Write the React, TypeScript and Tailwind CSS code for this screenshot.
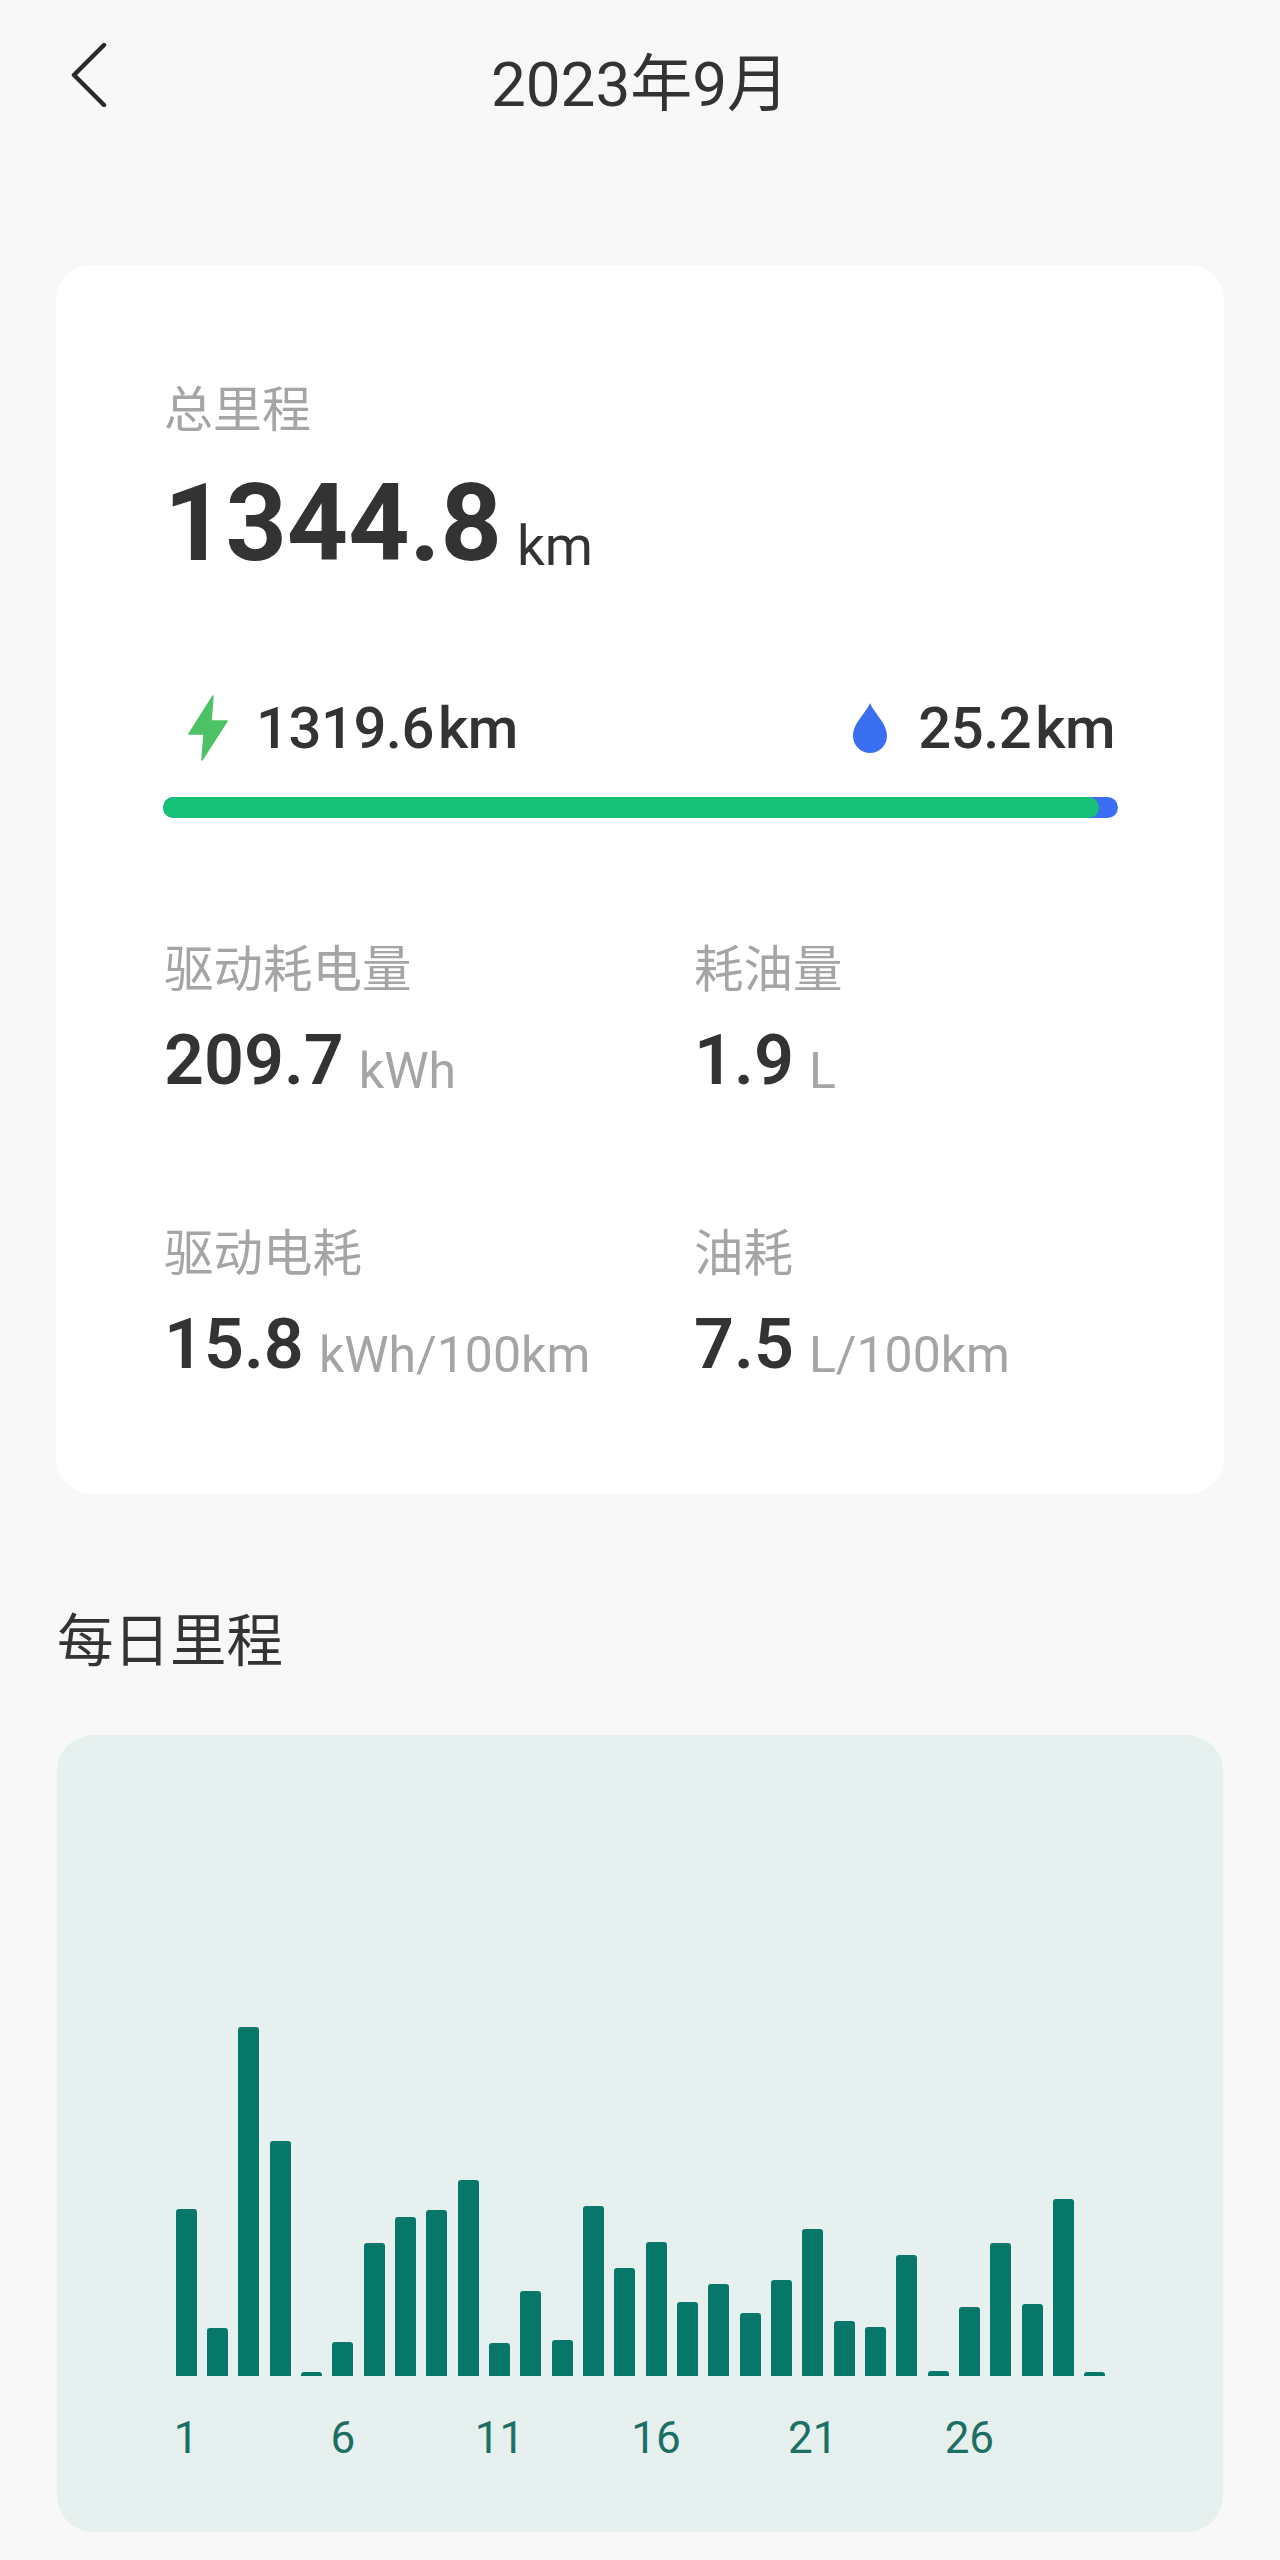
const dailyKm = [
  167, 48, 349, 235, 4, 34, 133, 159, 166, 196, 33, 85, 36, 170, 108, 134, 74, 92, 63, 96, 147, 55, 49, 121, 5, 69,
  133, 72, 177, 4,
]

const stats = [
  { label: "驱动耗电量", value: "209.7", unit: "kWh" },
  { label: "耗油量", value: "1.9", unit: "L" },
  { label: "驱动电耗", value: "15.8", unit: "kWh/100km" },
  { label: "油耗", value: "7.5", unit: "L/100km" },
]

function BackIcon() {
  return (
    <svg width="36" height="64" viewBox="0 0 36 64" fill="none" className="ml-[71px] mt-[1px]">
      <path d="M33 2 L3 32 L33 62" stroke="#2b2b2b" strokeWidth="4.5" strokeLinecap="round" strokeLinejoin="round" />
    </svg>
  )
}

function BoltIcon() {
  return (
    <svg width="40" height="66" viewBox="0 0 40 66" className="ml-[25px]">
      <path d="M25 1 L1 39 L16 39 L14 65 L39 26 L23 26 Z" fill="#4cc264" stroke="#4cc264" strokeWidth="1.5" strokeLinejoin="round" />
    </svg>
  )
}

function DropIcon() {
  return (
    <svg width="34" height="50" viewBox="0 0 34 50">
      <path d="M17 0 C21 10 34 20 34 33 A17 17 0 0 1 0 33 C0 20 13 10 17 0 Z" fill="#3a6ff2" />
    </svg>
  )
}

export default function App() {
  return (
    <div className="min-h-[2560px] bg-[#f8f8f8] font-['Roboto','Noto_Sans_CJK_SC',sans-serif] text-[#333333]">
      <header className="grid h-[265px] grid-cols-[1fr_auto_1fr] items-start pt-[42px]">
        <BackIcon />
        <h1 className="mt-[3px] text-[62px] leading-[80px] font-normal">2023年9月</h1>
      </header>

      <section className="mx-[56px] rounded-[36px] bg-white pt-[116px] pr-[106px] pb-[110px] pl-[107px]">
        <p className="pl-[1px] text-[49px] leading-[60px] text-[#a5a5a5]">总里程</p>
        <div className="mt-[23px] h-[120px] pl-[1px]">
          <span className="text-[107px] leading-[120px] font-bold">1344.8</span>
          <span className="ml-[15px] align-[-5px] text-[55px] leading-none">km</span>
        </div>

        <div className="mt-[108px] flex items-center justify-between">
          <div className="flex items-center">
            <BoltIcon />
            <span className="ml-[28px] flex items-baseline gap-[4px] text-[58px] leading-[72px] font-medium tracking-[-0.5px]">
              <span>1319.6</span>
              <span>km</span>
            </span>
          </div>
          <div className="mr-[3px] flex items-center">
            <DropIcon />
            <span className="ml-[31px] flex items-baseline gap-[4px] text-[58px] leading-[72px] font-medium tracking-[-0.5px]">
              <span>25.2</span>
              <span>km</span>
            </span>
          </div>
        </div>

        <div className="mt-[33px] h-[21px] overflow-hidden rounded-full bg-[#3b6ef5]">
          <div className="h-full w-[98%] rounded-r-full bg-[#17c077]" />
        </div>

        <div className="mt-[122px] grid grid-cols-[530px_1fr] gap-y-[124px] pl-[1px]">
          {stats.map((item) => (
            <div key={item.label}>
              <p className="text-[49.5px] leading-[60px] text-[#a5a5a5]">{item.label}</p>
              <div className="mt-[20px] h-[80px]">
                <span className="text-[70px] leading-[80px] font-semibold">{item.value}</span>
                <span className="ml-[15px] align-[-4px] text-[50px] leading-none text-[#a5a5a5]">{item.unit}</span>
              </div>
            </div>
          ))}
        </div>
      </section>

      <h2 className="mt-[113px] ml-[57px] text-[56.5px] leading-[70px] font-normal">每日里程</h2>

      <section className="mt-[58px] mr-[57px] ml-[57px] flex h-[797px] flex-col justify-end rounded-[36px] bg-[#e6f1ef] pb-[69px] pl-[113.5px]">
        <div className="grid grid-cols-[repeat(30,31.33px)] items-end">
          {dailyKm.map((height, i) => (
            <div key={i} className="flex justify-center">
              <div className="w-[21px] rounded-t-[3px] bg-[#07776a]" style={{ height }} />
            </div>
          ))}
        </div>
        <div className="mt-[37px] grid grid-cols-[repeat(30,31.33px)]">
          {dailyKm.map((_, i) => (
            <div key={i} className="flex justify-center text-[44px] leading-[50px] whitespace-nowrap text-[#1c6f64]">
              {i % 5 === 0 ? i + 1 : ""}
            </div>
          ))}
        </div>
      </section>
    </div>
  )
}
